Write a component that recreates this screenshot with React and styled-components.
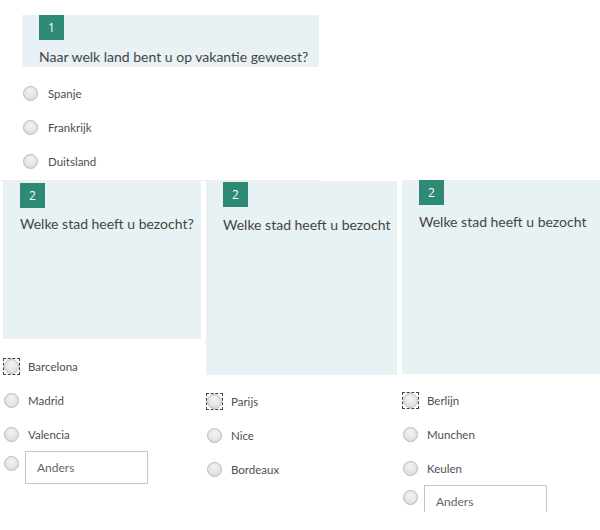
import React from "react";
import styled, { createGlobalStyle } from "styled-components";

const Global = createGlobalStyle`
  html, body { margin: 0; padding: 0; background: #ffffff; }
  body { font-family: Lato, "Open Sans", sans-serif; }
`;

const Page = styled.div`
  width: 600px;
  height: 530px;
  overflow: hidden;
  background: #ffffff;
  display: flex;
  flex-direction: column;
`;

const TopSection = styled.section`
  width: 320px;
  height: 181px;
  box-sizing: border-box;
  padding-top: 15px;
  border-bottom: 1px solid #eeeeee;
`;

const Header = styled.div`
  box-sizing: border-box;
  margin-left: ${(p) => p.$ml || 0}px;
  width: ${(p) => p.$w}px;
  height: ${(p) => p.$h}px;
  padding-left: 17px;
  padding-top: ${(p) => p.$pt || 0}px;
  background: #e8f1f3;
  overflow: hidden;
`;

const Badge = styled.div`
  width: 25px;
  height: 25px;
  background: #2e8a74;
  color: #ffffff;
  font-family: "Open Sans", sans-serif;
  font-size: 12px;
  display: flex;
  align-items: center;
  justify-content: center;
`;

const QuestionText = styled.div`
  margin-top: ${(p) => p.$mt}px;
  font-size: 14px;
  line-height: 20px;
  color: #454545;
  white-space: nowrap;
`;

const OptionList = styled.div`
  display: flex;
  flex-direction: column;
  padding-top: ${(p) => p.$pt}px;
  padding-left: ${(p) => p.$pl || 0}px;
`;

const OptionRow = styled.div`
  display: flex;
  align-items: ${(p) => (p.$top ? "flex-start" : "center")};
  height: 34px;
`;

const RadioBox = styled.span`
  box-sizing: border-box;
  width: 17px;
  height: 17px;
  flex: none;
  display: flex;
  align-items: center;
  justify-content: center;
  border: 1px dashed ${(p) => (p.$focused ? "#444" : "transparent")};
  margin-top: ${(p) => (p.$top ? 4 : 0)}px;
`;

const Circle = styled.span`
  box-sizing: border-box;
  width: 15px;
  height: 15px;
  border-radius: 50%;
  border: 1px solid #b9b9b9;
  background: radial-gradient(circle at 50% 35%, #f4f4f4 0%, #e3e3e3 60%, #d6d6d6 100%);
`;

const Label = styled.span`
  margin-left: ${(p) => p.$gap}px;
  font-size: 11.5px;
  color: #4e4e4e;
`;

const OtherInput = styled.div`
  box-sizing: border-box;
  margin-left: 5px;
  width: 123px;
  height: 33px;
  flex: none;
  border: 1px solid #c6c6c6;
  display: flex;
  align-items: center;
  padding-left: 11px;
  font-size: 12px;
  color: #666666;
  background: #fff;
`;

const Columns = styled.div`
  display: flex;
  gap: 5px;
  padding-left: 3px;
  align-items: flex-start;
`;

const Column = styled.div`
  width: ${(p) => p.$w}px;
  flex: none;
  margin-top: ${(p) => p.$mt || 0}px;
  ${(p) => (p.$clip ? `height: ${p.$clip}px; overflow: hidden;` : "")}
`;

function Option({ label, focused, gap = 8 }) {
  return (
    <OptionRow>
      <RadioBox $focused={focused}>
        <Circle />
      </RadioBox>
      <Label $gap={gap}>{label}</Label>
    </OptionRow>
  );
}

function OtherOption() {
  return (
    <OptionRow $top>
      <RadioBox $top>
        <Circle />
      </RadioBox>
      <OtherInput>Anders</OtherInput>
    </OptionRow>
  );
}

const columns = [
  {
    w: 198,
    h: 158,
    mt: 0,
    badgePt: 2,
    textMt: 6,
    text: "Welke stad heeft u bezocht?",
    pt: 10,
    options: ["Barcelona", "Madrid", "Valencia"],
    other: true,
  },
  {
    w: 191,
    h: 194,
    mt: 0,
    badgePt: 1,
    textMt: 8,
    text: "Welke stad heeft u bezocht",
    pt: 9,
    options: ["Parijs", "Nice", "Bordeaux"],
    other: false,
  },
  {
    w: 198,
    h: 194,
    mt: -1,
    badgePt: 0,
    textMt: 7,
    text: "Welke stad heeft u bezocht",
    pt: 9,
    options: ["Berlijn", "Munchen", "Keulen"],
    other: true,
    clip: 332,
  },
];

export default function App() {
  return (
    <>
      <Global />
      <Page>
        <TopSection>
          <Header $ml={22} $w={297} $h={52}>
            <Badge>1</Badge>
            <QuestionText $mt={7}>Naar welk land bent u op vakantie geweest?</QuestionText>
          </Header>
          <OptionList $pt={9} $pl={22}>
            <Option label="Spanje" gap={9} />
            <Option label="Frankrijk" gap={9} />
            <Option label="Duitsland" gap={9} />
          </OptionList>
        </TopSection>
        <Columns>
          {columns.map((c, i) => (
            <Column key={i} $w={c.w} $mt={c.mt} $clip={c.clip}>
              <Header $w={c.w} $h={c.h} $pt={c.badgePt}>
                <Badge>2</Badge>
                <QuestionText $mt={c.textMt}>{c.text}</QuestionText>
              </Header>
              <OptionList $pt={c.pt}>
                {c.options.map((o, j) => (
                  <Option key={o} label={o} focused={j === 0} />
                ))}
                {c.other && <OtherOption />}
              </OptionList>
            </Column>
          ))}
        </Columns>
      </Page>
    </>
  );
}
